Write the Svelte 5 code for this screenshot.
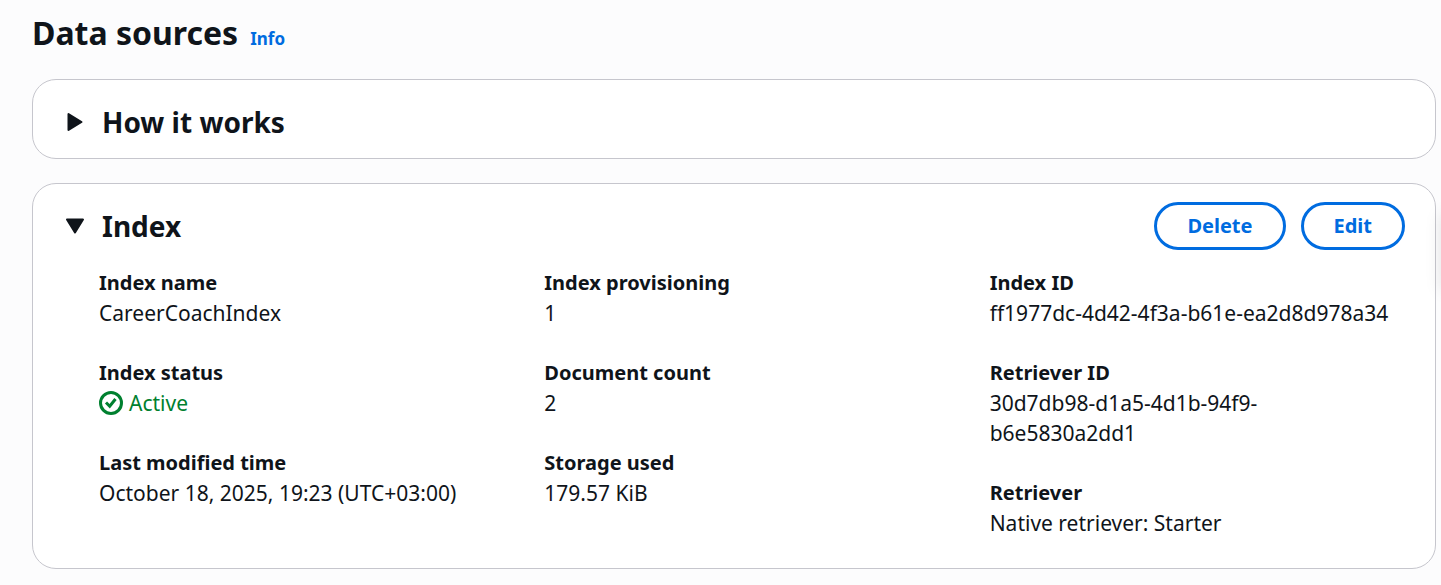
<script>
  let howOpen = $state(false);
  let indexOpen = $state(true);

  const columns = [
    [
      { label: 'Index name', value: 'CareerCoachIndex' },
      { label: 'Index status', value: 'Active', status: true },
      { label: 'Last modified time', value: 'October 18, 2025, 19:23 (UTC+03:00)' }
    ],
    [
      { label: 'Index provisioning', value: '1' },
      { label: 'Document count', value: '2' },
      { label: 'Storage used', value: '179.57 KiB' }
    ],
    [
      { label: 'Index ID', value: 'ff1977dc-4d42-4f3a-b61e-ea2d8d978a34' },
      { label: 'Retriever ID', value: '30d7db98-d1a5-4d1b-94f9-b6e5830a2dd1' },
      { label: 'Retriever', value: 'Native retriever: Starter' }
    ]
  ];
</script>

{#snippet caret(open)}
  <svg class="caret" class:open viewBox="0 0 24 24" aria-hidden="true">
    <path d="M5.5 4v16L18.5 12z" stroke-linejoin="round" stroke-width="2" />
  </svg>
{/snippet}

<main>
  <header class="page-header">
    <h1>Data sources</h1>
    <a class="info" href="#info">Info</a>
  </header>

  <section class="card">
    <div class="card-header">
      <h2>
        <button class="toggle" aria-expanded={howOpen} onclick={() => (howOpen = !howOpen)}>
          {@render caret(howOpen)}How it works
        </button>
      </h2>
    </div>
  </section>

  <section class="card">
    <div class="card-header">
      <h2>
        <button class="toggle" aria-expanded={indexOpen} onclick={() => (indexOpen = !indexOpen)}>
          {@render caret(indexOpen)}Index
        </button>
      </h2>
      <div class="actions">
        <button class="action">Delete</button>
        <button class="action">Edit</button>
      </div>
    </div>
    {#if indexOpen}
      <div class="details">
        {#each columns as column}
          <dl>
            {#each column as item}
              <div class="pair">
                <dt>{item.label}</dt>
                {#if item.status}
                  <dd class="active">
                    <svg class="check" viewBox="0 0 24 24" aria-hidden="true">
                      <circle cx="12" cy="12" r="10.5" />
                      <path d="M7 11.5l3.7 3.7L16.5 8" />
                    </svg>{item.value}
                  </dd>
                {:else}
                  <dd>{item.value}</dd>
                {/if}
              </div>
            {/each}
          </dl>
        {/each}
      </div>
    {/if}
  </section>
</main>
<div class="drawer-edge" aria-hidden="true"></div>

<style>
  :global(body) {
    margin: 0;
    background: #fcfcfd;
  }
  main {
    padding: 8px 5px 0 32px;
    color: #0f141a;
    font: 21px/30px "Noto Sans", "Open Sans", sans-serif;
  }
  h1, h2, dl, dd {
    margin: 0;
  }
  button {
    font: inherit;
    color: inherit;
    background: none;
    cursor: pointer;
  }
  .page-header {
    display: flex;
    align-items: baseline;
    gap: 12px;
    margin-bottom: 21px;
  }
  h1 {
    font-size: 32px;
    line-height: 50px;
    font-weight: 700;
  }
  .info {
    color: #006ce0;
    font-size: 17px;
    font-weight: 700;
    text-decoration: none;
  }
  .card {
    background: #fff;
    border: 1px solid #c6c6cd;
    border-radius: 24px;
    margin-bottom: 24px;
  }
  .card:last-child {
    margin-bottom: 16px;
  }
  .card-header {
    display: flex;
    justify-content: space-between;
    align-items: center;
    padding: 18px 30px 12px;
  }
  h2 {
    font-size: 28px;
    line-height: 48px;
    font-weight: 700;
  }
  .toggle {
    display: flex;
    align-items: center;
    gap: 15px;
    padding: 0;
    border: 0;
  }
  .caret {
    width: 24px;
    height: 24px;
    fill: #0f141a;
    stroke: #0f141a;
  }
  .open {
    transform: rotate(90deg);
  }
  .actions {
    display: flex;
    gap: 15px;
  }
  .action {
    padding: 6px 30px;
    border: 3px solid #006ce0;
    border-radius: 30px;
    color: #006ce0;
    font-size: 20px;
    font-weight: 700;
  }
  .details {
    display: grid;
    grid-template-columns: repeat(3, 1fr);
    gap: 30px;
    padding: 6px 30px 30px 66px;
  }
  dl {
    display: flex;
    flex-direction: column;
    gap: 30px;
  }
  dt {
    font-size: 20px;
    font-weight: 700;
  }
  dd {
    padding-right: 6px;
  }
  .active {
    display: flex;
    align-items: center;
    gap: 6px;
    color: #00802f;
  }
  .check {
    width: 24px;
    height: 24px;
    fill: none;
    stroke: #00802f;
    stroke-width: 3;
  }
  .drawer-edge {
    position: fixed;
    top: 214px;
    left: 100%;
    width: 60px;
    height: 76px;
    box-shadow: 0 0 16px rgba(0, 7, 22, 0.1);
  }
</style>
